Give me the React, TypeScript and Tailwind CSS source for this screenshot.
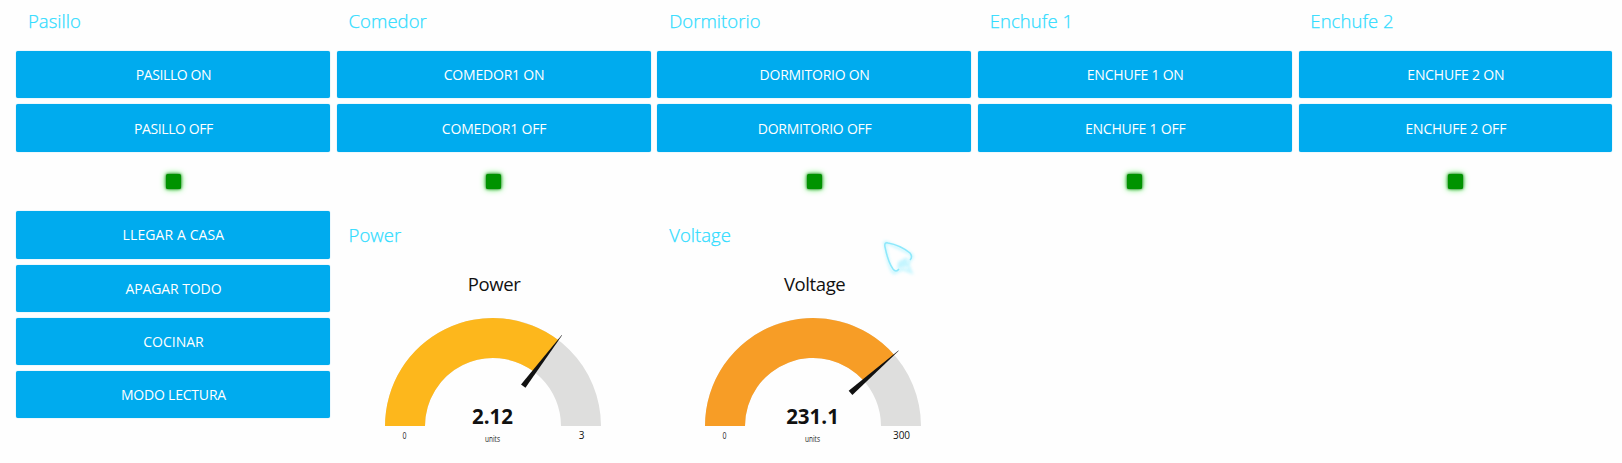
import React from "react";

type Room = { title: string; on: string; off: string; tracking: string };

const rooms: Room[] = [
  { title: "Pasillo", on: "PASILLO ON", off: "PASILLO OFF", tracking: "tracking-[-0.4px]" },
  { title: "Comedor", on: "COMEDOR1 ON", off: "COMEDOR1 OFF", tracking: "tracking-[-0.2px]" },
  { title: "Dormitorio", on: "DORMITORIO ON", off: "DORMITORIO OFF", tracking: "tracking-[-0.25px]" },
  { title: "Enchufe 1", on: "ENCHUFE 1 ON", off: "ENCHUFE 1 OFF", tracking: "tracking-[-0.2px]" },
  { title: "Enchufe 2", on: "ENCHUFE 2 ON", off: "ENCHUFE 2 OFF", tracking: "tracking-[-0.2px]" },
];

const scenes = [
  { label: "LLEGAR A CASA", tracking: "tracking-[0.1px]" },
  { label: "APAGAR TODO", tracking: "tracking-[-0.1px]" },
  { label: "COCINAR", tracking: "tracking-[0px]" },
  { label: "MODO LECTURA", tracking: "tracking-[-0.2px]" },
];

function Title({ children }: { children: React.ReactNode }) {
  return (
    <h2 className="h-[42px] pl-[11.7px] text-[18.5px] leading-[42px] font-[350] tracking-[0.05px] text-[#30dcff] [-webkit-text-stroke:0.25px_#30dcff]">
      {children}
    </h2>
  );
}

function ActionButton({ children, tracking }: { children: React.ReactNode; tracking: string }) {
  return (
    <button
      className={`flex h-full w-full items-center justify-center rounded-[2px] bg-[#00abee] pl-[0.5px] text-[14px] leading-[20px] text-white shadow-[0_0_1px_#58c4ee] ${tracking}`}
    >
      {children}
    </button>
  );
}

function Led() {
  return (
    <div className="flex h-[59px] items-center justify-center">
      <span className="size-[15px] rounded-[1.5px] bg-[#009300] shadow-[0_0_3px_#126012,0_0_6px_#30e830]" />
    </div>
  );
}

type GaugeProps = { label: string; value: number; max: number; color: string };

function Gauge({ label, value, max, color }: GaugeProps) {
  const theta = Math.PI * (1 - value / max);
  const outer = 108;
  const inner = 68;
  const point = (r: number) => `${156 + r * Math.cos(theta)} ${116 - r * Math.sin(theta)}`;
  const fill = `M48 116A${outer} ${outer} 0 0 1 ${point(outer)}L${point(inner)}A${inner} ${inner} 0 0 0 88 116Z`;
  return (
    <section>
      <Title>{label}</Title>
      <h3 className="mt-[14px] h-[30px] pl-[0.5px] text-center text-[18.5px] leading-[28px] tracking-[-0.4px] text-[#111]">{label}</h3>
      <svg className="mt-[10px] block h-[139px] w-[314px]" viewBox="0 0 314 139">
        <path d="M48 116A108 108 0 0 1 264 116H224A68 68 0 0 0 88 116Z" fill="#dededd" />
        <path d={fill} fill={color} />
        <g transform={`translate(156 116) rotate(${(-theta * 180) / Math.PI})`}>
          <path d="M50 -2.8L114 -0.2V0.2L50 2.8Z" fill="#111" />
        </g>
        <text x="155.5" y="114" textAnchor="middle" fontSize="20.5" fontWeight="700" fill="#111">{value}</text>
        <text x="155.5" y="132" textAnchor="middle" fontSize="8.5" textLength="15" lengthAdjust="spacingAndGlyphs" fill="#222">units</text>
        <text x="67.5" y="129" textAnchor="middle" fontSize="8.5" textLength="4" lengthAdjust="spacingAndGlyphs" fill="#222">0</text>
        <text x="244.5" y="129.3" textAnchor="middle" fontSize="10" fill="#111">{max}</text>
      </svg>
    </section>
  );
}

function Pointer() {
  return (
    <svg className="absolute top-[237px] left-[879px] h-[42px] w-[40px]" viewBox="0 0 40 42" fill="none">
      <defs>
        <filter id="glow" x="-30%" y="-30%" width="160%" height="160%">
          <feGaussianBlur stdDeviation="1.5" />
        </filter>
        <filter id="soft">
          <feGaussianBlur stdDeviation="0.7" />
        </filter>
      </defs>
      <path d="M6 7Q5 4 9 6L32 17Q35 20 31 23L29 28L32 35L24 32L15 36Q10 33 6 7Z" stroke="#a9f2ff" strokeWidth="3" filter="url(#glow)" opacity="0.6" />
      <path d="M28 20L19 25L18 32L29 29Z" fill="#b5f3ff" filter="url(#glow)" opacity="0.8" />
      <path d="M31 23Q34 20 31 16Q21 8 9 6Q5 5 6 10Q9 25 14 32Q17 36 20 32" stroke="#8de8fb" strokeWidth="1.5" filter="url(#soft)" />
    </svg>
  );
}

export default function App() {
  return (
    <main className="relative h-[463px] w-[1622px] overflow-hidden bg-[#fefefe] pl-[16.3px] font-['Open_Sans',sans-serif]">
      <div className="grid grid-cols-[repeat(5,313.8px)] gap-x-[6.8px]">
        {rooms.map((room) => (
          <section key={room.title}>
            <Title>{room.title}</Title>
            <div className="mt-[9px] grid grid-rows-[47px_48px] gap-[6px]">
              <ActionButton tracking={room.tracking}>{room.on}</ActionButton>
              <ActionButton tracking={room.tracking}>
                <span className="pt-px">{room.off}</span>
              </ActionButton>
            </div>
            <Led />
          </section>
        ))}
      </div>
      <div className="grid grid-cols-[repeat(5,313.8px)] gap-x-[6.8px]">
        <div className="grid grid-rows-[48px_47px_47px_47px] content-start gap-[6.1px]">
          {scenes.map((scene) => (
            <ActionButton key={scene.label} tracking={scene.tracking}>
              {scene.label}
            </ActionButton>
          ))}
        </div>
        <div className="pt-[3px]">
          <Gauge label="Power" value={2.12} max={3} color="#fdb71c" />
        </div>
        <div className="pt-[3px]">
          <Gauge label="Voltage" value={231.1} max={300} color="#f79d26" />
        </div>
      </div>
      <Pointer />
    </main>
  );
}
